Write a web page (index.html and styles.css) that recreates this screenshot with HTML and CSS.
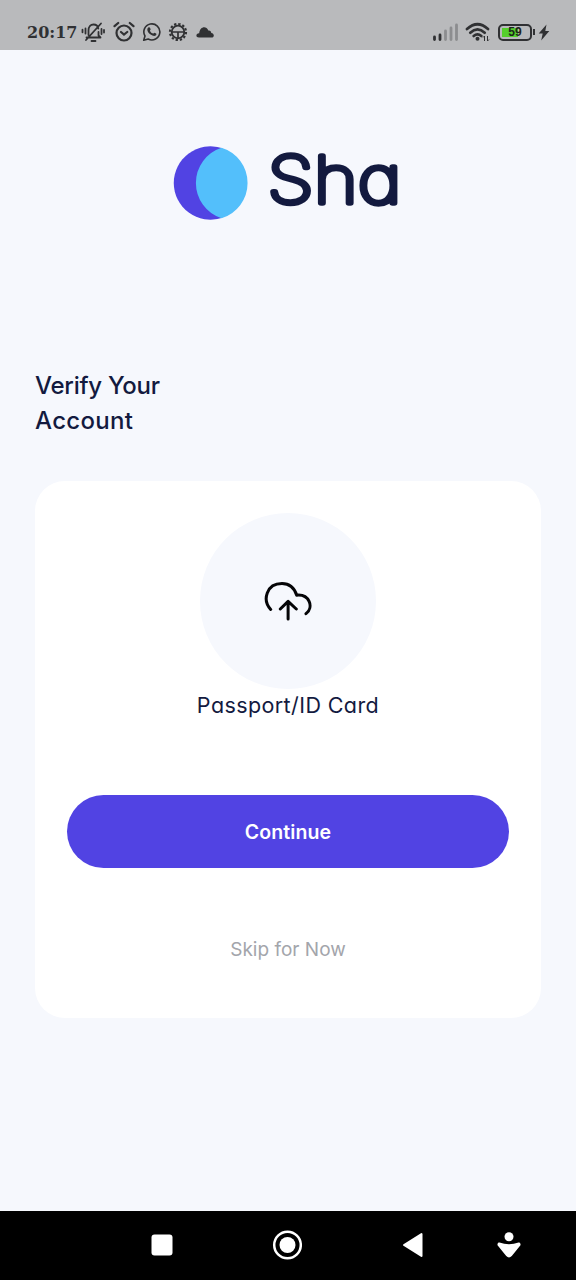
FILE: index.html
```html
<!DOCTYPE html>
<html lang="en">
<head>
<meta charset="utf-8">
<meta name="viewport" content="width=device-width, initial-scale=1">
<title>Verify Your Account</title>
<link rel="stylesheet" href="styles.css">
</head>
<body>
<header class="status">
  <div class="status-left">
    <span class="clock">20:17</span>
    <svg class="bell" width="24" height="22" viewBox="0 0 24 22" fill="none" stroke="#303133" stroke-width="1.8" stroke-linecap="round" stroke-linejoin="round"><path d="M5.500 16.500h14M7.500 14V9.500C7.500 6 9.500 3.500 12.500 3.500s4.500 2 4.800 4M17.500 11v3.500l2 2M20 2.500 5 19M10.500 20h4M4.500 7.500v5M1.500 8.700v2.600M20.500 8v5M23 9v2.600"/></svg>
    <svg class="alarm" width="22" height="22" viewBox="0 0 22 22" fill="none" stroke="#303133" stroke-width="2.200" stroke-linecap="round"><circle cx="11" cy="12" r="7.500"/><path d="M1.500 5.200 5.200 2M20.500 5.200 16.800 2M8 11l3 2.500 3.200-2.500"/></svg>
    <svg class="whatsapp" width="20" height="20" viewBox="0 0 20 20"><path d="M1.700 18.300 3 14A8 8 0 1 1 6.200 17z" fill="none" stroke="#303133" stroke-width="1.600" stroke-linejoin="round"/><path d="M6.300 5.600c.7-.7 1.500-.4 1.800.4l.5 1.300c.2.500-.8 1.200-.6 1.600.7 1.300 1.700 2.200 3 2.700.5.200 1-1.100 1.500-.9l1.600.8c.6.300.3 1.600-.4 2.100-1.300 1-3.300.3-5.100-1-2-1.500-3.400-3.500-3.300-5.200 0-.7.500-1.300 1-1.800z" fill="#303133"/></svg>
    <svg class="gear" width="20" height="20" viewBox="0 0 20 20" fill="none" stroke="#303133"><circle cx="10" cy="10" r="8" stroke-width="2.200" stroke-dasharray="2.300 1.890"/><circle cx="10" cy="10" r="6.300" stroke-width="1.800"/><path d="M4 10h12M10 10v6" stroke-width="1.700"/></svg>
    <svg class="cloud" width="18" height="11" viewBox="0 0 18 11"><path d="M3 10.500C-.8 10.500-.2 6 3.200 6.200 3.800-.5 10.300-1.800 12.300 3.500c2-.3 2.800.8 3 2.400 3.400.5 3.200 4.600.3 4.600z" fill="#303133"/></svg>
  </div>
  <div class="status-right">
    <svg width="26" height="18" viewBox="0 0 26 18"><path d="M1.500 16.500v-2.500M7 16.500v-4.500" stroke="#303133" stroke-width="2.800" stroke-linecap="round"/><path d="M12.500 16.500V8M18 16.500V5M23.500 16.500V2" stroke="#8c8d8f" stroke-width="2.800" stroke-linecap="round"/></svg>
    <svg class="wifi" width="26" height="20" viewBox="0 0 26 20"><path d="M2 7Q12.500-2.500 23 7M5.300 10.700q7.200-6.500 14.400 0M8.700 14q3.800-3.200 7.600 0" fill="none" stroke="#303133" stroke-width="2.700" stroke-linecap="round"/><circle cx="12.500" cy="16.700" r="2" fill="#303133"/><path d="M19.500 14v5M18 15.500l1.500-1.500M22.500 14v5M24 17.500l-1.500 1.500" stroke="#303133" stroke-width="1"/></svg>
    <span class="battery"><span class="level"></span><span class="pct">59</span></span>
    <span class="battery-tip"></span>
    <svg class="bolt" width="12" height="17" viewBox="0 0 12 17"><path d="M8.500.5.700 9.500h4l-1.500 7L11.300 7h-4z" fill="#303133"/></svg>
  </div>
</header>

<main class="screen">
  <svg class="logo" width="240" height="76" viewBox="0 0 240 76" role="img" aria-label="Sha">
    <path d="M48.500 3A36.700 36.700 0 1 0 48.500 73L52 70V6z" fill="#5143e3"/>
    <path d="M48.500 2.800A36.800 36.800 0 0 1 48.500 73.200A37 37 0 0 1 48.500 2.800z" fill="#53bffb"/>
    <text class="wordmark" x="94.500" y="58" textLength="134" lengthAdjust="spacingAndGlyphs">Sha</text>
  </svg>
  <h1 class="title"><span class="line-one">Verify Your</span><br><span class="line-two">Account</span></h1>
  <section class="card">
    <div class="upload">
      <svg width="50" height="44" viewBox="0 0 50 44" fill="none" stroke="#050507" stroke-width="3" stroke-linecap="round" stroke-linejoin="round"><path d="M7.700 30.500C-1 21 3.500 4.500 19 4.500c7 0 12.300 4.200 14.700 11.700 12.400-1.200 17.600 11.800 9.300 18.500M25.100 40V22.500M17.300 30l7.800-7.600 8.200 7.600"/></svg>
    </div>
    <p class="caption">Passport/ID Card</p>
    <button class="primary" type="button">Continue</button>
    <a class="skip">Skip for Now</a>
  </section>
</main>

<nav class="navbar">
  <svg width="22" height="22" viewBox="0 0 22 22"><rect x=".5" y=".5" width="21" height="21" rx="3" fill="#fff"/></svg>
  <svg class="home" width="30" height="30" viewBox="0 0 30 30"><circle cx="15.500" cy="15" r="13.300" fill="none" stroke="#fff" stroke-width="2.500"/><circle cx="15.500" cy="15" r="8" fill="#fff"/></svg>
  <svg class="back" width="22" height="26" viewBox="0 0 22 26"><path d="M2 13 19.500 2v22z" fill="#fff" stroke="#fff" stroke-width="2" stroke-linejoin="round"/></svg>
  <svg class="person" width="24" height="26" viewBox="0 0 24 26" fill="#fff"><circle cx="12" cy="4.800" r="4.500"/><path d="M2 11.700q10 3.600 20 0l.3 1-8.500 10.500q-1.800 2-3.600 0L1.700 12.700z" stroke="#fff" stroke-width="2.500" stroke-linejoin="round"/></svg>
</nav>
</body>
</html>
```
FILE: styles.css
```css
* { box-sizing: border-box; }
body {
  margin: 0;
  height: 1280px;
  display: flex;
  flex-direction: column;
  background: #f6f8fd;
  color: #131a3f;
  font-family: Inter, "Open Sans", sans-serif;
  font-feature-settings: "cv11";
}
svg { display: block; flex: none; }

.status {
  height: 50px;
  padding: 14px 26px 0 27px;
  display: flex;
  justify-content: space-between;
  background: #b9babc;
  color: #303133;
}
.status-left, .status-right { display: flex; align-items: center; height: 36px; }
.clock { width: 54px; padding-top: 2px; font: bold 16px/20px "DejaVu Serif", serif; }
.alarm { margin-left: 8px; }
.whatsapp { margin-left: 7px; }
.gear { margin-left: 6px; }
.cloud { margin-left: 8px; }
.wifi { margin-left: 6px; }
.battery {
  position: relative;
  width: 34px;
  height: 17px;
  margin-left: 7px;
  padding: 2px;
  border: 2px solid #303133;
  border-radius: 5px;
}
.level { display: block; width: 16px; height: 9px; background: #55cf2c; }
.pct {
  position: absolute;
  inset: 0;
  text-align: center;
  font: bold 12px/13px "Liberation Sans", sans-serif;
  color: #1d251c;
}
.battery-tip { width: 2px; height: 6px; margin-left: 1px; background: #303133; }
.bolt { margin-left: 3px; }

.screen { flex: 1; display: flex; flex-direction: column; padding: 95px 35px 0; }
.logo { margin-left: 138px; overflow: visible; }
.wordmark {
  font: 100 65px Inter, sans-serif;
  font-feature-settings: "cv11";
  fill: #131a3f;
  stroke: #131a3f;
  stroke-width: 5.4px;
  stroke-linejoin: round;
}
.title { margin: 147px 0 0; font-size: 24px; line-height: 35px; font-weight: 550; }
.line-one { letter-spacing: -0.25px; }
.line-two { letter-spacing: 0.3px; }
.card {
  height: 537px;
  margin-top: 43px;
  padding: 32px 32px 0;
  display: flex;
  flex-direction: column;
  align-items: center;
  background: #fff;
  border-radius: 30px;
}
.upload { width: 176px; height: 176px; display: grid; place-items: center; border-radius: 50%; background: #f6f8fd; }
.caption { margin: 0; font-size: 21.5px; line-height: 32px; letter-spacing: 0.4px; }
.primary {
  width: 442px;
  height: 73px;
  margin-top: 74px;
  border: 0;
  border-radius: 37px;
  background: #5143e3;
  color: #fff;
  font: 600 19.5px Inter, sans-serif;
  font-feature-settings: "cv11";
  letter-spacing: 0.1px;
}
.skip { margin-top: 67px; font-size: 19px; line-height: 30px; color: #a3a5ab; }

.navbar { height: 69px; padding: 0 0 1px 151px; display: flex; align-items: center; background: #000; }
.home { margin-left: 99px; }
.back { margin-left: 100px; }
.person { margin-left: 73px; }
```
